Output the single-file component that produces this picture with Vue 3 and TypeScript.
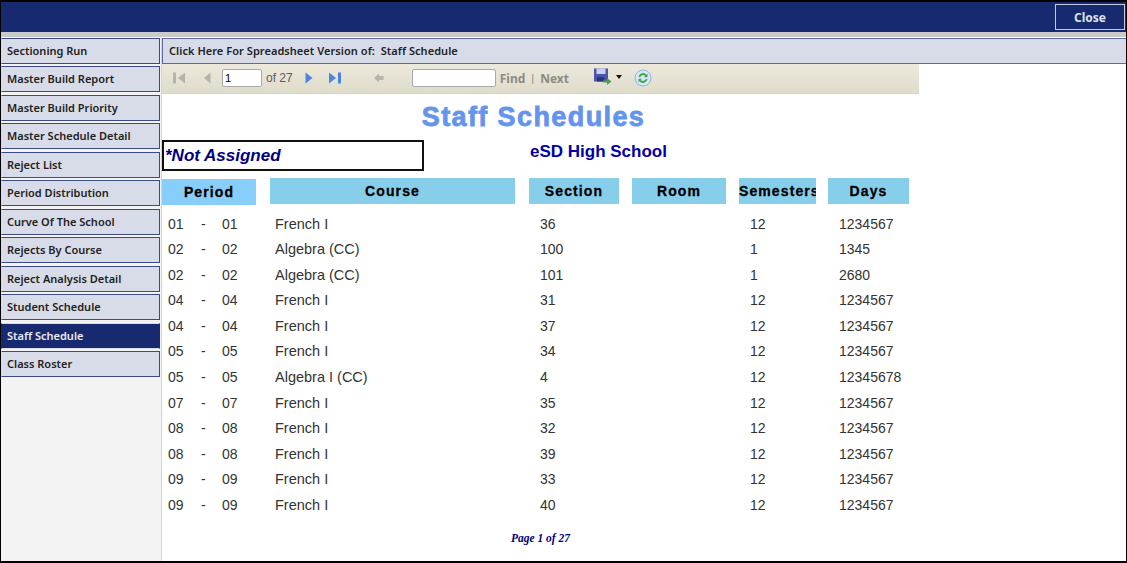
<script setup lang="ts">
interface Row { from: string; to: string; course: string; section: string; sem: string; days: string }
const nav: string[] = ['Sectioning Run','Master Build Report','Master Build Priority','Master Schedule Detail','Reject List','Period Distribution','Curve Of The School','Rejects By Course','Reject Analysis Detail','Student Schedule','Staff Schedule','Class Roster']
const rows: Row[] = [
  ['01','French I','36','12','1234567'],['02','Algebra (CC)','100','1','1345'],['02','Algebra (CC)','101','1','2680'],
  ['04','French I','31','12','1234567'],['04','French I','37','12','1234567'],['05','French I','34','12','1234567'],
  ['05','Algebra I (CC)','4','12','12345678'],['07','French I','35','12','1234567'],['08','French I','32','12','1234567'],
  ['08','French I','39','12','1234567'],['09','French I','33','12','1234567'],['09','French I','40','12','1234567'],
].map(([p,course,section,sem,days]) => ({ from:p, to:p, course, section, sem, days }))
</script>

<template>
  <div class="app">
    <header class="top">
      <button class="close">Close</button>
    </header>
    <div class="strip"></div>
    <div class="main">
      <nav class="side">
        <a v-for="n in nav" :key="n" class="item" :class="{ active: n === 'Staff Schedule' }">{{ n }}</a>
      </nav>
      <section class="content">
        <div class="title-bar">Click Here For Spreadsheet Version of:&nbsp; Staff Schedule</div>
        <div class="report">
          <div class="toolbar">
            <svg class="ic first" width="14" height="14" viewBox="0 0 14 14"><rect x="1" y="1.500" width="3" height="11" fill="#b4b4aa"/><path d="M13 1.500v11L6 7z" fill="#b4b4aa"/></svg>
            <svg class="ic prev" width="8" height="14" viewBox="0 0 8 14"><path d="M7.500 1.500v11L1 7z" fill="#b4b4aa"/></svg>
            <input class="page" value="1" />
            <span class="of">of 27</span>
            <svg class="ic next" width="8" height="14" viewBox="0 0 8 14"><path d="M.5 1.500v11L7.500 7z" fill="#4a86e0"/></svg>
            <svg class="ic last" width="14" height="14" viewBox="0 0 14 14"><path d="M1 1.500v11L8 7z" fill="#4a86e0"/><rect x="10" y="1.500" width="3" height="11" fill="#4a86e0"/></svg>
            <svg class="ic back" width="12" height="12" viewBox="0 0 12 12"><path d="M6 1.500v2.500h4.500v4H6v2.500L1 6z" fill="#b4b4aa"/></svg>
            <input class="find" />
            <span class="link">Find</span><span class="sep">|</span><span class="link">Next</span>
            <svg class="ic save" width="19" height="18" viewBox="0 0 19 18"><rect x="1" y="0.500" width="14" height="13" fill="#4a55b0"/><rect x="3.500" y="0.500" width="9" height="5.500" fill="#c9cfee"/><rect x="4" y="9" width="7" height="4.500" fill="#2b3478"/><path d="M10 12.500h4V10l4.500 3.500L14 17v-2.500h-4z" fill="#4aa34a"/></svg>
            <svg class="ic drop" width="6" height="4" viewBox="0 0 6 4"><path d="M0 0h6L3 4z" fill="#111"/></svg>
            <svg class="ic refresh" width="18" height="18" viewBox="0 0 18 18"><circle cx="9" cy="9" r="8" fill="#d6e6f8" stroke="#8fb4e6"/><path d="M4.500 8a4.600 4.600 0 0 1 8-2.300l1-1v3.600H10l1.200-1.200A2.900 2.900 0 0 0 6.300 8z" fill="#3fa845"/><path d="M13.500 10a4.600 4.600 0 0 1-8 2.300l-1 1V9.700H8l-1.200 1.200a2.900 2.900 0 0 0 4.900-.9z" fill="#3fa845"/></svg>
          </div>
          <h1 class="report-title">Staff Schedules</h1>
          <div class="info">
            <div class="staff">*Not Assigned</div>
            <div class="school">eSD High School</div>
          </div>
          <div class="grid heads">
            <div class="h period">Period</div>
            <div class="h">Course</div>
            <div class="h">Section</div>
            <div class="h">Room</div>
            <div class="h clip">Semesters</div>
            <div class="h">Days</div>
          </div>
          <div class="rows">
            <div v-for="(r, i) in rows" :key="i" class="grid row">
              <div class="cell pcell"><span>{{ r.from }}</span><span>-</span><span>{{ r.to }}</span></div>
              <div class="cell course">{{ r.course }}</div>
              <div class="cell sec">{{ r.section }}</div>
              <div class="cell"></div>
              <div class="cell sem">{{ r.sem }}</div>
              <div class="cell days">{{ r.days }}</div>
            </div>
          </div>
          <div class="footer">Page 1 of 27</div>
        </div>
      </section>
    </div>
  </div>
</template>

<style>
html, body { margin: 0; background: #fff; overflow: hidden; }
</style>

<style scoped>
.app { box-sizing: border-box; width: 1127px; height: 563px; border: solid #000; border-width: 2px 1px 2px 1px; display: flex; flex-direction: column; background: #fff; overflow: hidden; font-family: "Noto Sans", sans-serif; }
.top { height: 30px; flex: none; background: #172a70; display: flex; justify-content: flex-end; align-items: flex-start; padding: 2px 1px 0 0; box-sizing: border-box; }
.close { width: 70px; height: 26px; margin: 0; background: #172a70; border: 1px solid #c4cbe0; color: #dfe3ee; font: 700 12px "Noto Sans", sans-serif; padding: 0; }
.strip { height: 5px; flex: none; background: #cacaca; }
.main { flex: 1; display: flex; min-height: 0; }
.side { box-sizing: border-box; width: 161px; flex: none; background: #f3f3f3; border-right: 1px solid #d4d4d4; padding-right: 1px; display: flex; flex-direction: column; gap: 2.5px; padding-top: .6px; }
.item { box-sizing: border-box; height: 26px; background: #d8dce8; border: 1px solid #3c4a86; border-left-color: #d8dce8; color: #222; font-size: 11px; font-weight: 600; line-height: 24px; padding-left: 5px; white-space: nowrap; }
.item.active { background: #172a70; color: #e9ecf5; border-color: #d8dce8 #172a70; }
.content { flex: 1; display: flex; flex-direction: column; min-width: 0; }
.title-bar { box-sizing: border-box; height: 26px; margin-top: 1px; background: #d8dce8; border: 1px solid #5a6aa8; border-right: none; color: #222; font-size: 11px; font-weight: 600; letter-spacing: .05px; line-height: 24px; padding-left: 6px; }
.report { width: 757px; }
.toolbar { box-sizing: border-box; height: 30px; background: linear-gradient(#ece9dc, #e0dccb); border-bottom: 1px solid #d9d6c8; display: flex; align-items: center; padding-bottom: 1px; color: #6a6a6a; }
.ic { flex: none; display: block; }
.first { margin-left: 10px; }
.prev { margin-left: 17px; }
.page { box-sizing: border-box; width: 40px; height: 18px; margin-left: 11px; border: 1px solid #a9a9a9; border-radius: 2px; background: #fff; padding: 0 2px; font: 11px "Liberation Sans", sans-serif; color: #000; }
.of { margin-left: 4px; font: 12px "Liberation Sans", sans-serif; color: #5c5c5c; }
.next { margin-left: 12px; }
.last { margin-left: 15px; }
.back { margin-left: 31px; }
.find { box-sizing: border-box; width: 84px; height: 18px; margin-left: 27px; border: 1px solid #a9a9a9; border-radius: 2px; background: #fff; padding: 0; }
.link { font: 700 12px "Noto Sans", sans-serif; color: #8b8b85; }
.find + .link { margin-left: 4px; }
.sep { font: 11px "Liberation Sans", sans-serif; color: #8b8b85; margin: 0 6px; }
.save { margin-left: 24px; margin-bottom: 3px; }
.drop { margin-left: 4px; margin-bottom: 3px; }
.refresh { margin-left: 12px; }
.report-title { margin: 8px 0 0; height: 30px; text-align: center; font: 700 27px/30px "Liberation Sans", sans-serif; letter-spacing: 1.400px; color: #6495ed; -webkit-text-stroke: .8px #6495ed; padding-right: 14px; }
.info { display: flex; margin-top: 8px; height: 31px; }
.staff { box-sizing: border-box; width: 262px; height: 31px; border: 2px solid #111; color: #00007f; font: italic 700 17px/27px "Liberation Sans", sans-serif; padding-left: 1px; }
.school { margin-left: 106px; color: #0000a8; font: 700 17px/23px "Liberation Sans", sans-serif; }
.grid { display: grid; grid-template-columns: 96px 247px 91px 95px 77px 81px; column-gap: 12px; }
.heads { margin-top: 7px; height: 27px; }
.h { height: 26px; background: #87ceeb; color: #000; font: 700 14px/26px "Liberation Sans", sans-serif; letter-spacing: 1.100px; text-align: center; white-space: nowrap; overflow: hidden; -webkit-text-stroke: .3px #000; }
.h:nth-child(1), .h:nth-child(2) { margin-right: 2px; }
.h:nth-child(3), .h:nth-child(4) { margin-right: 1px; }
.h.period { background: #87cefa; margin-top: 1px; }
.h.clip { text-align: left; }
.rows { margin-top: 6.7px; }
.row { height: 25.55px; }
.cell { padding-left: 5px; font: 14px/25.55px "Liberation Sans", sans-serif; color: #333; white-space: nowrap; }
.course { font-size: 14.5px; }
.pcell { padding-left: 6px; display: flex; }
.pcell span:nth-child(1) { width: 33px; }
.pcell span:nth-child(2) { width: 21px; }
.sec, .sem, .days { padding-left: 11px; }
.footer { margin-top: 14px; text-align: center; color: #00007f; font: italic 700 11.5px "Liberation Serif", serif; }
</style>
